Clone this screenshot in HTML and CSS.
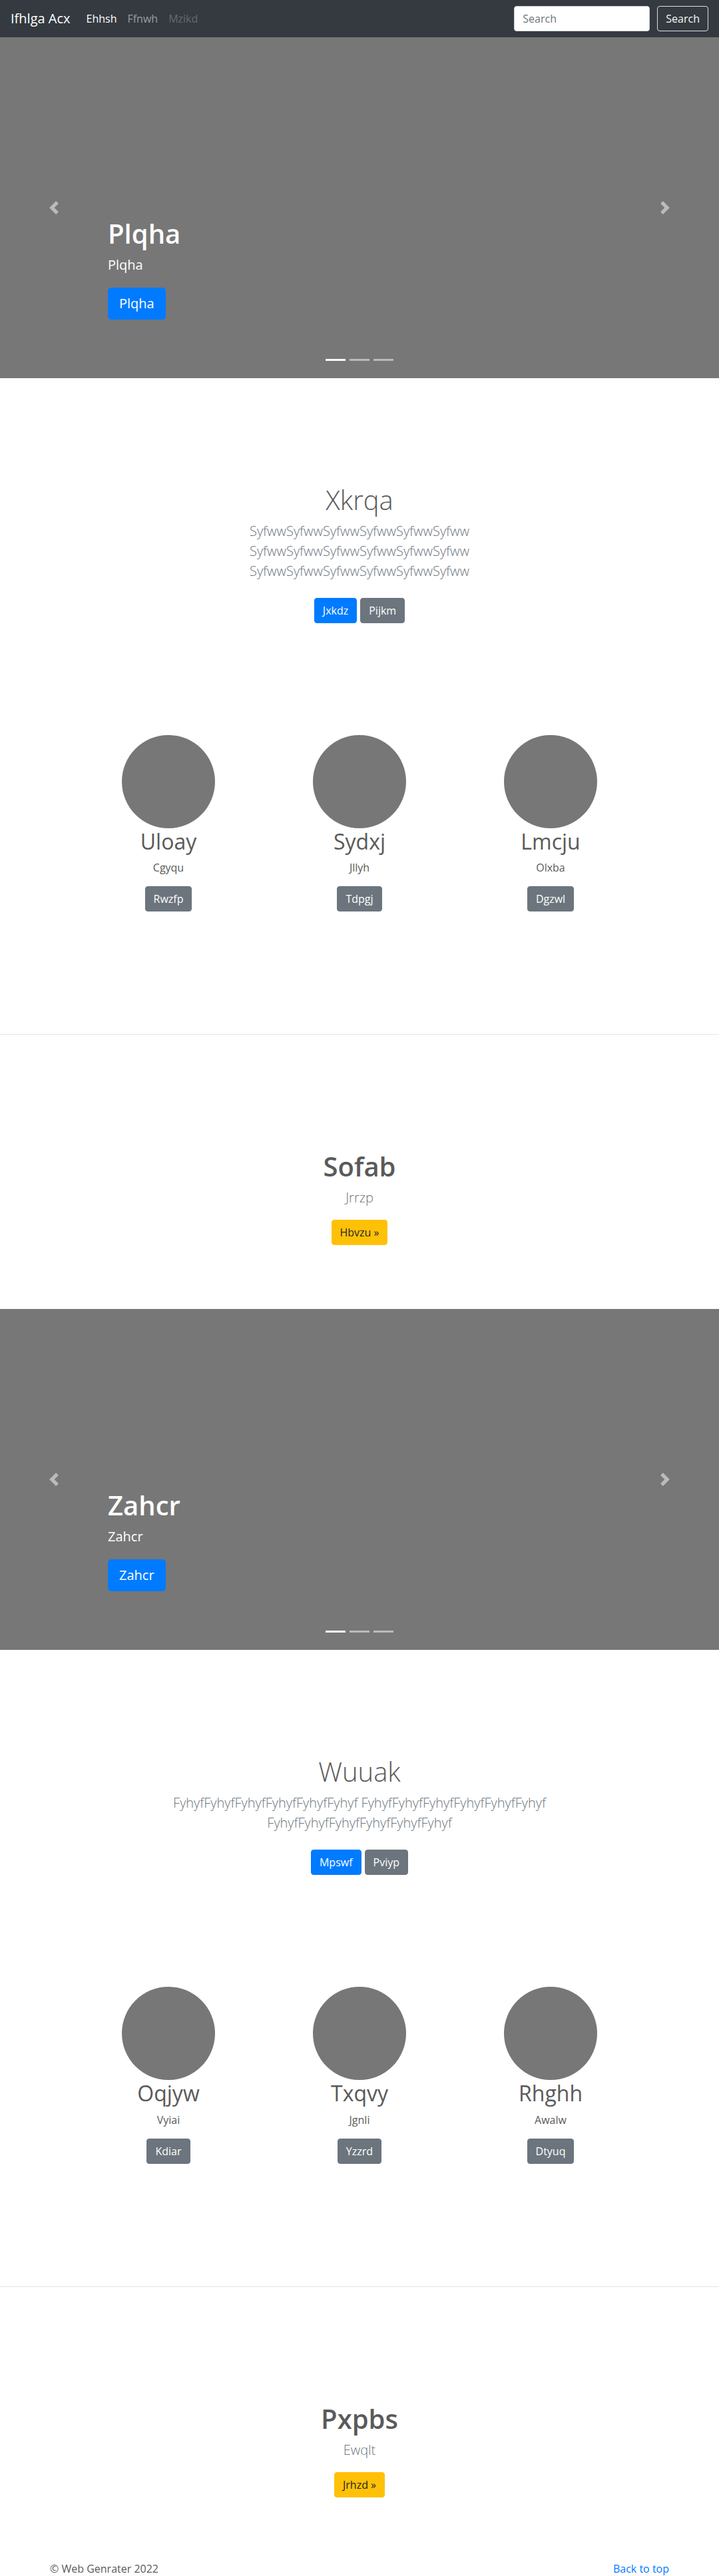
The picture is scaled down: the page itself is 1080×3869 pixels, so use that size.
FILE: index.html
```html
<!DOCTYPE html>
<html lang="en">
<head>
<meta charset="utf-8">
<title>Ifhlga Acx</title>
<link rel="stylesheet" href="styles.css">
</head>
<body>
<header class="navbar">
  <a class="brand" href="#">Ifhlga Acx</a>
  <ul class="nav">
    <li><a class="nav-link active" href="#">Ehhsh</a></li>
    <li><a class="nav-link" href="#">Ffnwh</a></li>
    <li><a class="nav-link disabled" href="#">Mzikd</a></li>
  </ul>
  <form class="search">
    <input class="search-input" type="text" placeholder="Search">
    <button class="search-btn" type="button">Search</button>
  </form>
</header>

<section class="carousel">
  <a class="control control-prev" href="#"><svg viewBox="0 0 8 8" width="20" height="20"><path d="M5.25 0l-4 4 4 4 1.5-1.5L4.25 4l2.5-2.5L5.25 0z"/></svg></a>
  <a class="control control-next" href="#"><svg viewBox="0 0 8 8" width="20" height="20"><path d="M2.75 0l-1.5 1.5L3.75 4l-2.5 2.5L2.75 8l4-4-4-4z"/></svg></a>
  <div class="caption">
    <h1 class="caption-title">Plqha</h1>
    <p class="caption-text">Plqha</p>
    <a class="btn btn-lg btn-primary" href="#">Plqha</a>
  </div>
  <ol class="indicators"><li class="active"></li><li></li><li></li></ol>
</section>

<section class="jumbo">
  <div class="jumbo-inner">
    <h1 class="jumbo-heading">Xkrqa</h1>
    <p class="lead muted">SyfwwSyfwwSyfwwSyfwwSyfwwSyfww SyfwwSyfwwSyfwwSyfwwSyfwwSyfww SyfwwSyfwwSyfwwSyfwwSyfwwSyfww</p>
    <div class="btn-row">
      <a class="btn btn-primary" href="#">Jxkdz</a>
      <a class="btn btn-secondary" href="#">Pijkm</a>
    </div>
  </div>
</section>

<section class="marketing">
  <div class="col">
    <svg class="circle" width="140" height="140"><circle cx="70" cy="70" r="70"/></svg>
    <h2 class="col-title">Uloay</h2>
    <p class="col-text">Cgyqu</p>
    <a class="btn btn-secondary" href="#">Rwzfp</a>
  </div>
  <div class="col">
    <svg class="circle" width="140" height="140"><circle cx="70" cy="70" r="70"/></svg>
    <h2 class="col-title">Sydxj</h2>
    <p class="col-text">Jllyh</p>
    <a class="btn btn-secondary" href="#">Tdpgj</a>
  </div>
  <div class="col">
    <svg class="circle" width="140" height="140"><circle cx="70" cy="70" r="70"/></svg>
    <h2 class="col-title">Lmcju</h2>
    <p class="col-text">Olxba</p>
    <a class="btn btn-secondary" href="#">Dgzwl</a>
  </div>
</section>

<hr class="divider">

<section class="feature">
  <h1 class="feature-heading">Sofab</h1>
  <p class="lead muted">Jrrzp</p>
  <a class="btn btn-warning" href="#">Hbvzu »</a>
</section>

<section class="carousel">
  <a class="control control-prev" href="#"><svg viewBox="0 0 8 8" width="20" height="20"><path d="M5.25 0l-4 4 4 4 1.5-1.5L4.25 4l2.5-2.5L5.25 0z"/></svg></a>
  <a class="control control-next" href="#"><svg viewBox="0 0 8 8" width="20" height="20"><path d="M2.75 0l-1.5 1.5L3.75 4l-2.5 2.5L2.75 8l4-4-4-4z"/></svg></a>
  <div class="caption">
    <h1 class="caption-title">Zahcr</h1>
    <p class="caption-text">Zahcr</p>
    <a class="btn btn-lg btn-primary" href="#">Zahcr</a>
  </div>
  <ol class="indicators"><li class="active"></li><li></li><li></li></ol>
</section>

<section class="jumbo">
  <div class="jumbo-inner">
    <h1 class="jumbo-heading">Wuuak</h1>
    <p class="lead muted">FyhyfFyhyfFyhyfFyhyfFyhyfFyhyf FyhyfFyhyfFyhyfFyhyfFyhyfFyhyf FyhyfFyhyfFyhyfFyhyfFyhyfFyhyf</p>
    <div class="btn-row">
      <a class="btn btn-primary" href="#">Mpswf</a>
      <a class="btn btn-secondary" href="#">Pviyp</a>
    </div>
  </div>
</section>

<section class="marketing">
  <div class="col">
    <svg class="circle" width="140" height="140"><circle cx="70" cy="70" r="70"/></svg>
    <h2 class="col-title">Oqjyw</h2>
    <p class="col-text">Vyiai</p>
    <a class="btn btn-secondary" href="#">Kdiar</a>
  </div>
  <div class="col">
    <svg class="circle" width="140" height="140"><circle cx="70" cy="70" r="70"/></svg>
    <h2 class="col-title">Txqvy</h2>
    <p class="col-text">Jgnli</p>
    <a class="btn btn-secondary" href="#">Yzzrd</a>
  </div>
  <div class="col">
    <svg class="circle" width="140" height="140"><circle cx="70" cy="70" r="70"/></svg>
    <h2 class="col-title">Rhghh</h2>
    <p class="col-text">Awalw</p>
    <a class="btn btn-secondary" href="#">Dtyuq</a>
  </div>
</section>

<hr class="divider">

<section class="feature">
  <h1 class="feature-heading">Pxpbs</h1>
  <p class="lead muted">Ewqlt</p>
  <a class="btn btn-warning" href="#">Jrhzd »</a>
</section>

<footer class="footer">
  <p class="footer-text">© Web Genrater 2022</p>
  <p class="footer-text"><a class="footer-link" href="#">Back to top</a></p>
</footer>
</body>
</html>
```

FILE: styles.css
```css
* { box-sizing: border-box; }

html, body {
  margin: 0;
  padding: 0;
}

body {
  font-family: "Open Sans", "Noto Sans", "Liberation Sans", sans-serif;
  font-size: 16px;
  line-height: 1.5;
  color: #5a5a5a;
  background: #fff;
}

a { text-decoration: none; }

/* Navbar */
.navbar {
  height: 56px;
  display: flex;
  align-items: center;
  padding: 8px 16px;
  background: #343a40;
}

.brand {
  font-size: 20px;
  line-height: 30px;
  padding: 5px 0;
  margin-right: 16px;
  color: #fff;
  white-space: nowrap;
}

.nav {
  display: flex;
  list-style: none;
  margin: 0;
  padding: 0;
}

.nav-link {
  display: block;
  padding: 8px;
  color: rgba(255, 255, 255, 0.5);
}

.nav-link.active { color: #fff; }
.nav-link.disabled { color: rgba(255, 255, 255, 0.25); }

.search {
  margin-left: auto;
  display: flex;
  align-items: center;
}

.search-input {
  width: 204px;
  height: 38px;
  padding: 6px 12px;
  font: inherit;
  font-size: 16px;
  color: #495057;
  background: #fff;
  border: 1px solid #ced4da;
  border-radius: 4px;
  margin-right: 11px;
}

.search-input::placeholder { color: #6c757d; }

.search-btn {
  height: 38px;
  padding: 6px 12px;
  font: inherit;
  font-size: 16px;
  line-height: 24px;
  color: #f8f9fa;
  background: transparent;
  border: 1px solid #dcdfe2;
  border-radius: 4px;
}

/* Carousel */
.carousel {
  position: relative;
  height: 512px;
  background: #777;
  overflow: hidden;
}

.control {
  position: absolute;
  top: 0;
  bottom: 0;
  width: 15%;
  display: flex;
  align-items: center;
  justify-content: center;
  opacity: 0.5;
}

.control svg { fill: #fff; display: block; }
.control-prev { left: 0; }
.control-next { right: 0; }

.caption {
  position: absolute;
  left: 15%;
  right: 15%;
  bottom: 88px;
  color: #fff;
  text-align: left;
}

.caption-title {
  font-size: 40px;
  line-height: 48px;
  font-weight: 600;
  margin: 0 0 8px;
}

.caption-text {
  font-size: 20px;
  line-height: 30px;
  margin: 0 0 19px;
}

.indicators {
  position: absolute;
  left: 0;
  right: 0;
  bottom: 26px;
  display: flex;
  justify-content: center;
  gap: 6px;
  list-style: none;
  margin: 0;
  padding: 0;
}

.indicators li {
  width: 30px;
  height: 3px;
  background: rgba(255, 255, 255, 0.5);
}

.indicators li.active { background: #fff; }

/* Buttons */
.btn {
  display: inline-block;
  padding: 6px 12px;
  font-size: 16px;
  line-height: 24px;
  border: 1px solid transparent;
  border-radius: 4px;
  text-align: center;
  white-space: nowrap;
}

.btn-lg {
  padding: 8px 16px;
  font-size: 20px;
  line-height: 30px;
  border-radius: 4.8px;
}

.btn-primary { background: #007bff; border-color: #007bff; color: #fff; }
.btn-secondary { background: #6c757d; border-color: #6c757d; color: #fff; }
.btn-warning { background: #ffc107; border-color: #ffc107; color: #212529; }

/* Jumbotron-like section */
.jumbo {
  padding-top: 159px;
  text-align: center;
}

.jumbo-inner {
  max-width: 640px;
  margin: 0 auto;
  padding: 0 15px;
}

.jumbo-heading {
  font-size: 40px;
  line-height: 48px;
  font-weight: 300;
  margin: 0 0 8px;
}

.lead {
  font-size: 20px;
  line-height: 30px;
  font-weight: 300;
  margin: 0 0 16px;
}

.muted { color: #6c757d; }

.btn-row {
  display: flex;
  justify-content: center;
  gap: 5px;
  padding-top: 9px;
}

/* Marketing */
.marketing {
  display: grid;
  grid-template-columns: repeat(3, 287px);
  justify-content: center;
  margin-top: 168px;
}

.col {
  display: flex;
  flex-direction: column;
  align-items: center;
  text-align: center;
}

.circle { display: block; fill: #777; margin-bottom: 1px; }

.col-title {
  font-size: 32px;
  line-height: 38.4px;
  font-weight: 400;
  margin: 0 0 8px;
}

.col-text {
  margin: 0 0 16px;
}

.divider {
  margin: 184px 0 0;
  border: 0;
  border-top: 1px solid rgba(0, 0, 0, 0.1);
  height: 0;
}

/* Feature */
.feature {
  text-align: center;
  padding-top: 174px;
  padding-bottom: 96px;
}

.feature-heading {
  font-size: 40px;
  line-height: 48px;
  font-weight: 600;
  margin: 0 0 8px;
}

.feature .lead { margin-bottom: 18px; }

/* Footer */
.footer {
  max-width: 960px;
  margin: -1px auto 0;
  padding: 0 15px;
  display: flex;
  justify-content: space-between;
}

.footer-text { margin: 0 0 16px; }

.footer-link { color: #007bff; }
```
